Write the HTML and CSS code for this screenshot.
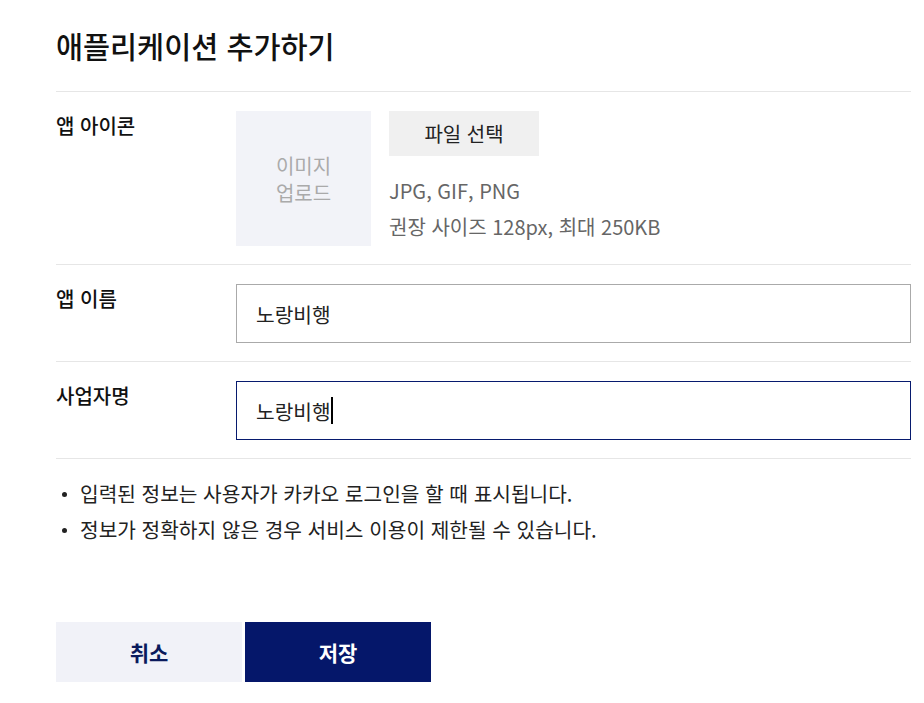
FILE: index.html
```html
<!DOCTYPE html>
<html lang="ko">
<head>
<meta charset="utf-8">
<title>애플리케이션 추가하기</title>
<link rel="stylesheet" href="styles.css">
</head>
<body>
<div class="page">
  <header class="header">
    <h1 class="title">애플리케이션 추가하기</h1>
  </header>
  <div class="row">
    <div class="label">앱 아이콘</div>
    <div class="icon-field">
      <div class="icon-box">이미지<br>업로드</div>
      <div class="icon-side">
        <button class="file-btn" type="button">파일 선택</button>
        <div class="hint">JPG, GIF, PNG</div>
        <div class="hint">권장 사이즈 128px, 최대 250KB</div>
      </div>
    </div>
  </div>
  <div class="row">
    <div class="label">앱 이름</div>
    <div class="field">노랑비행</div>
  </div>
  <div class="row">
    <div class="label">사업자명</div>
    <div class="field field-focus">노랑비행<span class="caret"></span></div>
  </div>
  <ul class="notes">
    <li>입력된 정보는 사용자가 카카오 로그인을 할 때 표시됩니다.</li>
    <li>정보가 정확하지 않은 경우 서비스 이용이 제한될 수 있습니다.</li>
  </ul>
  <div class="actions">
    <button class="btn btn-cancel" type="button">취소</button>
    <button class="btn btn-save" type="button">저장</button>
  </div>
</div>
</body>
</html>
```
FILE: styles.css
```css
* { box-sizing: border-box; }
body {
  margin: 0;
  background: #fff;
  font-family: "Noto Sans CJK KR", "Noto Sans", sans-serif;
  color: #222;
}
.page {
  padding: 0 13px 0 56px;
}
.header {
  padding: 25px 0 26px;
  border-bottom: 1px solid #e6e6e6;
}
.title {
  margin: 0;
  font-size: 29.4px;
  line-height: 40px;
  font-weight: 500;
  color: #111;
}
.row {
  display: grid;
  grid-template-columns: 180px 1fr;
  padding: 19px 0 18px;
  border-bottom: 1px solid #e6e6e6;
}
.label {
  font-size: 20px;
  line-height: 30px;
  font-weight: 500;
  color: #111;
}
.icon-field {
  display: flex;
  gap: 18px;
}
.icon-box {
  width: 135px;
  height: 135px;
  background: #f2f3f8;
  color: #aaa;
  font-size: 20px;
  line-height: 27px;
  display: flex;
  align-items: center;
  justify-content: center;
  text-align: center;
}
.icon-side {
  display: flex;
  flex-direction: column;
}
.file-btn {
  width: 150px;
  height: 45px;
  border: 0;
  background: #f0f0f0;
  font-family: inherit;
  font-size: 20px;
  color: #222;
  margin-bottom: 17px;
  padding: 0;
}
.hint {
  font-size: 20px;
  line-height: 36px;
  color: #666;
}
.field {
  height: 59px;
  border: 1px solid #aaa;
  padding: 0 19px;
  display: flex;
  align-items: center;
  font-size: 20.3px;
  color: #222;
}
.field-focus {
  border-color: #071a6e;
}
.caret {
  display: inline-block;
  width: 2px;
  height: 27px;
  background: #000;
}
.notes {
  list-style: none;
  margin: 0;
  padding: 17px 0 0;
}
.notes li {
  position: relative;
  padding-left: 24px;
  font-size: 20.25px;
  line-height: 36px;
  color: #222;
}
.notes li::before {
  content: "";
  position: absolute;
  left: 6px;
  top: 16px;
  width: 5px;
  height: 5px;
  border-radius: 50%;
  background: #222;
}
.actions {
  display: flex;
  gap: 3px;
  margin-top: 74px;
}
.btn {
  width: 186px;
  height: 60px;
  border: 0;
  padding: 0;
  font-family: inherit;
  font-size: 21px;
  font-weight: 700;
}
.btn-cancel {
  background: #f1f2f8;
  color: #0a1a5c;
}
.btn-save {
  background: #05176a;
  color: #fff;
}
```
